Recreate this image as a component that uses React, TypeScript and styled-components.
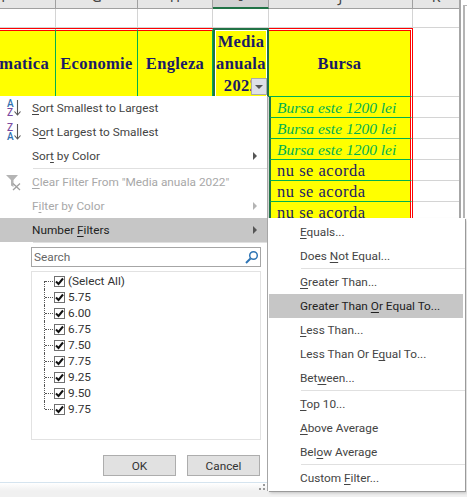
import React from 'react';
import styled, { createGlobalStyle } from 'styled-components';

const GlobalStyle = createGlobalStyle`
  html, body {
    background: #fff;
    margin: 0;
    overflow: hidden;
    padding: 0;
  }
`;

const Page = styled.div`
  display: flex;
  height: 497px;
  overflow: hidden;
  position: relative;
  width: 467px;
`;

const SheetArea = styled.div`
  border-right: 2px solid #a6a6a6;
  box-sizing: border-box;
  flex: none;
  overflow: hidden;
  width: 461px;
`;

const WindowEdge = styled.div`
  border-left: 2px solid #b4b4b4;
  border-top: 1px solid #b4b4b4;
  flex: 1;
  margin: 5px 0 0 2px;
`;

const Sheet = styled.div`
  display: grid;
  grid-template-columns: 101px 82px 75px 56px 144px 47px;
  grid-template-rows: 9px 19px 69px repeat(6, 21px);
  margin-left: -45px;
  width: 505px;
`;

const ColumnHeader = styled.div<{ $selected?: boolean }>`
  align-items: flex-end;
  background: ${(p) => (p.$selected ? '#d2d2d2' : '#e6e6e6')};
  border-bottom: ${(p) => (p.$selected ? '2px solid #217346' : '1px solid #a0a0a0')};
  border-right: 1px solid #a0a0a0;
  box-sizing: border-box;
  color: #444;
  display: flex;
  font: 14px/14px 'Noto Sans', sans-serif;
  justify-content: center;
  overflow: hidden;
`;

const ColumnLetter = styled.span`
  position: relative;
  top: -4px;
`;

const BlankCell = styled.div`
  border-bottom: 1px solid #d4d4d4;
  border-right: 1px solid #d4d4d4;
  box-sizing: border-box;
`;

const HeadCell = styled.div<{ $last?: boolean }>`
  align-items: center;
  background: #ff0;
  background-clip: padding-box;
  border-bottom: 1px solid #00b050;
  border-right: ${(p) => (p.$last ? '3px double #f00' : '1px solid #00b050')};
  border-top: 3px double #f00;
  box-sizing: border-box;
  color: #1a1a66;
  display: flex;
  font: bold 16.5px/22px 'Liberation Serif', serif;
  justify-content: center;
  letter-spacing: 0.35px;
  overflow: hidden;
  text-align: center;
`;

const SelectedHead = styled(HeadCell)`
  border: 2px solid #217346;
  border-bottom: none;
  box-shadow: inset 0 1px 0 #fff, inset 1px 0 0 #fff, inset -1px 0 0 #fff;
  padding-top: 1px;
  position: relative;
  white-space: nowrap;
`;

const FilterButton = styled.div`
  align-items: center;
  background: #dde0e6;
  border: 1px solid #a9a9a9;
  box-sizing: border-box;
  display: flex;
  height: 17px;
  justify-content: center;
  position: absolute;
  right: 0;
  top: 48px;
  width: 16px;
`;

const FilterArrow = styled.span`
  border-left: 4px solid transparent;
  border-right: 4px solid transparent;
  border-top: 4px solid #555;
`;

const DataCell = styled.div<{ $green?: boolean }>`
  align-items: center;
  background: #ff0;
  background-clip: padding-box;
  border-bottom: 1px solid #00b050;
  border-left: 2px solid #217346;
  border-right: 3px double #f00;
  box-sizing: border-box;
  color: ${(p) => (p.$green ? '#00b050' : '#1a1a66')};
  display: flex;
  font: ${(p) => (p.$green ? 'italic 15.5px' : 'normal 16.5px')}/20px 'Liberation Serif', serif;
  letter-spacing: ${(p) => (p.$green ? '0' : '0.5px')};
  padding: 1px 0 0 6px;
  white-space: nowrap;
`;

const Menu = styled.div`
  background: #fff;
  border-right: 1px solid #a8a8a8;
  box-sizing: border-box;
  color: #444;
  font: 11.8px/24px Roboto, sans-serif;
  height: 395px;
  left: 0;
  position: absolute;
  top: 96px;
  width: 268px;
`;

const Item = styled.div<{ $disabled?: boolean; $active?: boolean }>`
  align-items: center;
  background: ${(p) => (p.$active ? '#c6c6c6' : 'transparent')};
  box-sizing: border-box;
  color: ${(p) => (p.$disabled ? '#a8a8a8' : p.$active ? '#222' : '#444')};
  display: flex;
  height: 24px;
  padding-left: 32px;
  position: relative;
  white-space: nowrap;

  u {
    text-underline-offset: 2px;
  }
`;

const ItemIcon = styled.svg`
  left: 5px;
  position: absolute;
  top: 2px;
`;

const Chevron = styled.span<{ $disabled?: boolean }>`
  border-bottom: 4px solid transparent;
  border-left: 4px solid ${(p) => (p.$disabled ? '#b4b4b4' : '#555')};
  border-top: 4px solid transparent;
  position: absolute;
  right: 10px;
  top: 8px;
`;

const Separator = styled.div<{ $left: number }>`
  background: #e0e0e0;
  height: 1px;
  margin: 0 0 1px ${(p) => p.$left}px;
`;

const SearchBox = styled.div`
  align-items: center;
  border: 1px solid #a6a6a6;
  box-sizing: border-box;
  color: #666;
  display: flex;
  height: 20px;
  justify-content: space-between;
  margin: 4px 6px 0 31px;
  padding: 0 1px 0 2px;
`;

const Tree = styled.div`
  border: 1px solid #e2e2e2;
  box-sizing: border-box;
  height: 169px;
  margin: 4px 6px 0 31px;
  padding-top: 1px;
`;

const TreeRow = styled.div<{ $first?: boolean; $last?: boolean }>`
  align-items: center;
  color: #333;
  display: flex;
  height: 16px;
  line-height: 16px;
  padding-left: 12px;
  position: relative;

  &::before {
    border-left: 1px dotted #555;
    bottom: ${(p) => (p.$last ? '8px' : '0')};
    content: '';
    left: 12px;
    position: absolute;
    top: ${(p) => (p.$first ? '8px' : '0')};
  }

  &::after {
    border-top: 1px dotted #555;
    content: '';
    left: 13px;
    position: absolute;
    top: 8px;
    width: 8px;
  }
`;

const CheckBox = styled.span`
  align-items: center;
  background: #fff;
  border: 1px solid #707070;
  box-sizing: border-box;
  display: flex;
  height: 11px;
  justify-content: center;
  margin: 0 3px 0 10px;
  width: 11px;
`;

const ButtonRow = styled.div`
  display: flex;
  gap: 11px;
  justify-content: flex-end;
  margin: 15px 7px 0 0;
`;

const Button = styled.div`
  align-items: center;
  background: #e1e1e1;
  border: 1px solid #adadad;
  box-sizing: border-box;
  color: #333;
  display: flex;
  height: 21px;
  justify-content: center;
  width: 73px;
`;

const Footer = styled.div`
  background: linear-gradient(#fff, #f0f0f0);
  border-top: 1px solid #d5e4ef;
  bottom: 0;
  box-sizing: border-box;
  height: 9px;
  left: 0;
  position: absolute;
  right: 0;
`;

const Grip = styled.svg`
  bottom: 0;
  position: absolute;
  right: 1px;
`;

const SubMenu = styled(Menu)`
  border: none;
  box-shadow: 1px 1px 0 #9a9a9a, 2px 2px 3px rgba(0, 0, 0, 0.2);
  height: 273px;
  left: 268px;
  padding-top: 2px;
  top: 218px;
  width: 197px;
`;

const SubItem = styled(Item)`
  margin: 0 2px 0 1px;
  padding-left: 31px;
`;

const BottomEdge = styled.div`
  background: #f0f0f0;
  bottom: 0;
  height: 6px;
  left: 0;
  position: absolute;
  right: 0;
`;

const columns = ['F', 'G', 'H', 'I', 'J', 'K'];
const values = ['5.75', '6.00', '6.75', '7.50', '7.75', '9.25', '9.50', '9.75'];
const bursaRows = [
  'Bursa este 1200 lei',
  'Bursa este 1200 lei',
  'Bursa este 1200 lei',
  'nu se acorda',
  'nu se acorda',
  'nu se acorda',
];

const Mark = () => (
  <svg width="9" height="9" viewBox="0 0 9 9">
    <path d="M1 4.5 L3.5 7 L8 1.5" fill="none" stroke="#111" strokeWidth="2" />
  </svg>
);

const SortIcon = ({ top, bottom }: { top: string; bottom: string }) => (
  <ItemIcon width="18" height="20" viewBox="0 0 18 20">
    <text x="2" y="9" fontFamily="Roboto" fontSize="10" fontWeight="500" fill={top === 'A' ? '#2f6fb0' : '#7a4aa0'}>
      {top}
    </text>
    <text x="2" y="17.5" fontFamily="Roboto" fontSize="10" fontWeight="500" fill={bottom === 'A' ? '#2f6fb0' : '#7a4aa0'}>
      {bottom}
    </text>
    <path d="M12.5 2 V17 M9.5 13.5 L12.5 17 L15.5 13.5" fill="none" stroke="#555" strokeWidth="1.1" />
  </ItemIcon>
);

const App = () => {
  return (
    <Page>
      <GlobalStyle />
      <SheetArea>
        <Sheet>
          {columns.map((letter) => (
            <ColumnHeader key={letter} $selected={letter === 'I'}>
              <ColumnLetter>{letter}</ColumnLetter>
            </ColumnHeader>
          ))}
          {columns.map((letter) => (
            <BlankCell key={letter} />
          ))}
          <HeadCell>Informatica</HeadCell>
          <HeadCell>Economie</HeadCell>
          <HeadCell>Engleza</HeadCell>
          <SelectedHead>
            <div>
              Media
              <br />
              anuala
              <br />
              2022
            </div>
            <FilterButton>
              <FilterArrow />
            </FilterButton>
          </SelectedHead>
          <HeadCell $last>Bursa</HeadCell>
          <BlankCell />
          {bursaRows.map((text, index) => (
            <React.Fragment key={index}>
              <BlankCell />
              <BlankCell />
              <BlankCell />
              <BlankCell />
              <DataCell $green={text.startsWith('Bursa')}>{text}</DataCell>
              <BlankCell />
            </React.Fragment>
          ))}
        </Sheet>
      </SheetArea>
      <WindowEdge />

      <BottomEdge />

      <Menu>
        <Item>
          <SortIcon top="A" bottom="Z" />
          <span><u>S</u>ort Smallest to Largest</span>
        </Item>
        <Item>
          <SortIcon top="Z" bottom="A" />
          <span>S<u>o</u>rt Largest to Smallest</span>
        </Item>
        <Item>
          <span>Sor<u>t</u> by Color</span>
          <Chevron />
        </Item>
        <Separator $left={33} />
        <Item $disabled>
          <ItemIcon width="18" height="20" viewBox="0 0 18 20">
            <path d="M1 3 H13 L8.5 8 V15 L6 13.5 V8 Z" fill="#b4b4b4" />
            <path d="M8 11.5 L15 18 M15 11.5 L8 18" stroke="#a0a0a0" strokeWidth="1.3" />
          </ItemIcon>
          <span><u>C</u>lear Filter From "Media anuala 2022"</span>
        </Item>
        <Item $disabled>
          <span>F<u>i</u>lter by Color</span>
          <Chevron $disabled />
        </Item>
        <Item $active>
          <span>Number <u>F</u>ilters</span>
          <Chevron />
        </Item>
        <Separator $left={33} />
        <SearchBox>
          <span>Search</span>
          <svg width="15" height="15" viewBox="0 0 15 15">
            <circle cx="9.5" cy="5.5" r="3.8" fill="none" stroke="#2f75b5" strokeWidth="1.5" />
            <path d="M6.5 8.5 L2 13" stroke="#2f75b5" strokeWidth="2" />
          </svg>
        </SearchBox>
        <Tree>
          <TreeRow $first>
            <CheckBox><Mark /></CheckBox>
            (Select All)
          </TreeRow>
          {values.map((value, index) => (
            <TreeRow key={value} $last={index === values.length - 1}>
              <CheckBox><Mark /></CheckBox>
              {value}
            </TreeRow>
          ))}
        </Tree>
        <ButtonRow>
          <Button>OK</Button>
          <Button>Cancel</Button>
        </ButtonRow>
        <Footer>
          <Grip width="8" height="8" viewBox="0 0 8 8">
            <path d="M5 1 H7 V3 H5 Z M1 5 H3 V7 H1 Z M5 5 H7 V7 H5 Z" fill="#999" />
          </Grip>
        </Footer>
      </Menu>

      <SubMenu>
        <SubItem><span><u>E</u>quals...</span></SubItem>
        <SubItem><span>Does <u>N</u>ot Equal...</span></SubItem>
        <Separator $left={33} />
        <SubItem><span><u>G</u>reater Than...</span></SubItem>
        <SubItem $active><span>Greater Than <u>O</u>r Equal To...</span></SubItem>
        <SubItem><span><u>L</u>ess Than...</span></SubItem>
        <SubItem><span>Less Than Or E<u>q</u>ual To...</span></SubItem>
        <SubItem><span>Bet<u>w</u>een...</span></SubItem>
        <Separator $left={33} />
        <SubItem><span><u>T</u>op 10...</span></SubItem>
        <SubItem><span><u>A</u>bove Average</span></SubItem>
        <SubItem><span>Bel<u>o</u>w Average</span></SubItem>
        <Separator $left={33} />
        <SubItem><span>Custom <u>F</u>ilter...</span></SubItem>
      </SubMenu>
    </Page>
  );
};

export default App;
